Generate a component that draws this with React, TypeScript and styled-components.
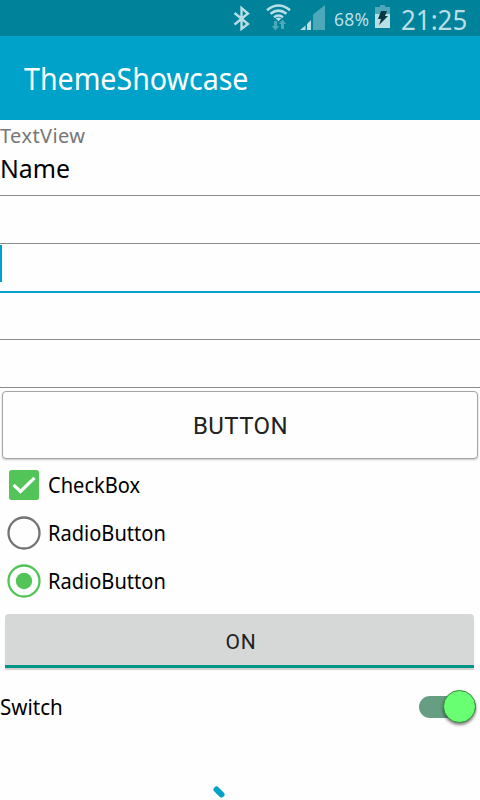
import React from 'react';
import styled, { createGlobalStyle } from 'styled-components';

const GlobalStyle = createGlobalStyle`
  * { box-sizing: border-box; }
  html, body { margin: 0; background: #fefefe; overflow: hidden; }
  body { font-family: "Noto Sans", sans-serif; color: #000; }
`;

const Screen = styled.main`
  width: 480px;
  height: 800px;
  display: flex;
  flex-direction: column;
  overflow: hidden;
  background: #fefefe;
`;

const StatusBar = styled.header`
  flex: none;
  height: 36px;
  display: flex;
  justify-content: flex-end;
  background: #00829b;
`;

const StatusIcons = styled.svg`
  flex: none;
  width: 100px;
  height: 36px;
`;

const BatteryIcon = styled.svg`
  flex: none;
  width: 20px;
  height: 36px;
`;

const Label = styled.span<{
  $size: number;
  $spacing?: number;
  $color?: string;
  $font?: string;
  $condense?: number;
}>`
  display: inline-block;
  font-family: ${(p) => p.$font ?? '"Noto Sans"'}, sans-serif;
  font-size: ${(p) => p.$size}px;
  letter-spacing: ${(p) => p.$spacing ?? 0}px;
  color: ${(p) => p.$color ?? '#000'};
  white-space: nowrap;
  transform: scaleX(${(p) => p.$condense ?? 1});
  transform-origin: left center;
`;

const Percent = styled.div`
  width: 40px;
  padding-left: 4px;
  line-height: 38px;
`;

const Clock = styled.div`
  width: 90px;
  padding-left: 11px;
  line-height: 39px;
`;

const AppBar = styled.header`
  flex: none;
  height: 84px;
  padding: 0 24px;
  line-height: 85px;
  background: #00a2ca;
`;

const Caption = styled.div`
  flex: none;
  height: 28px;
  line-height: 32px;
`;

const Field = styled.div<{ $height: number; $focused?: boolean }>`
  flex: none;
  height: ${(p) => p.$height}px;
  line-height: 41px;
  border-bottom: ${(p) => (p.$focused ? '2px solid #00a2ca' : '1px solid #8b8b8b')};
`;

const Caret = styled.div`
  width: 2px;
  height: 37px;
  margin-top: 1px;
  background: #00a2ca;
`;

const OutlineButton = styled.button`
  flex: none;
  width: 476px;
  height: 68px;
  margin: 3px 2px 2px;
  padding: 2px 0 0 1px;
  border: 1px solid #a5a5a5;
  border-radius: 4px;
  background: #fefefe;
  box-shadow: 0 1px 2px rgba(0, 0, 0, 0.22);
`;

const Option = styled.div`
  flex: none;
  height: 48px;
  display: flex;
  align-items: center;
`;

const Mark = styled.svg`
  flex: none;
  width: 48px;
  height: 48px;
`;

const ToggleButton = styled.button`
  flex: none;
  width: 469px;
  height: 54px;
  margin: 9px 5px 0;
  padding: 4px 0 0 3px;
  border: 0;
  border-bottom: 3px solid #009688;
  border-radius: 4px 4px 0 0;
  background: #d6d8d7;
  box-shadow: 0 2px 1px rgba(0, 0, 0, 0.18);
`;

const SwitchRow = styled.div`
  flex: none;
  height: 48px;
  margin-top: 15px;
  display: flex;
  align-items: center;
  justify-content: space-between;
`;

const SwitchTrack = styled.div`
  width: 57px;
  height: 22px;
  margin-right: 4px;
  display: flex;
  align-items: center;
  justify-content: flex-end;
  border-radius: 11px;
  background: #669e83;
`;

const SwitchThumb = styled.div`
  flex: none;
  width: 33px;
  height: 33px;
  margin-top: -1px;
  border: 1px solid #398940;
  border-radius: 50%;
  background: #69ff73;
  box-shadow: 0 2px 3px rgba(0, 0, 0, 0.5);
`;

const Spinner = styled.svg`
  flex: none;
  align-self: flex-start;
  width: 24px;
  height: 24px;
  margin: 49px 0 0 207px;
`;

const ROBOTO = 'Roboto';
const PALE = '#b9dfe5';

export default function App() {
  return (
    <>
      <GlobalStyle />
      <Screen>
        <StatusBar>
          <StatusIcons viewBox="230 0 100 36">
            <path d="M234.5 13 248 24 241.5 29V8L248 13.5 234.5 24.5" fill="none" stroke={PALE} strokeWidth="2.3" />
            <g fill="none" stroke={PALE} strokeWidth="2.6">
              <path d="M267 10.2Q278.500 .8 290 10.200" />
              <path d="M270.500 13.8Q278.500 7.600 286.500 13.800" />
              <path d="M274 17.200Q278.500 13.800 283 17.200" />
            </g>
            <path d="M275.700 18.500Q278.500 16.500 281.300 18.500L278.500 21.200Z" fill={PALE} />
            <path d="M274 21h3v5h2.200l-3.700 4.500-3.700-4.500H274ZM281 29v-5h-2.200l3.700-4.500 3.700 4.500H284v5Z" fill="#4da8b9" />
            <path d="M313 14.500 325 5v25h-12Z" fill="#4da8b9" />
            <path d="M300 30l5.500-4.500V30ZM307 24l4-4v10h-4Z" fill={PALE} />
          </StatusIcons>
          <Percent><Label $size={17.5} $spacing={0.2} $color={PALE}>68%</Label></Percent>
          <BatteryIcon viewBox="370 0 20 36">
            <path d="M375 7h5V5h5v2h5v7h-15Z" fill="#4da8b9" />
            <path d="M375 14h15v14h-15Z" fill={PALE} />
            <path d="M381 11h6l-2 5h3l-9 9 2-6h-3Z" fill="#063943" />
          </BatteryIcon>
          <Clock><Label $size={27} $condense={0.96} $color={PALE}>21:25</Label></Clock>
        </StatusBar>

        <AppBar><Label $size={30} $condense={0.952} $color="#fff">ThemeShowcase</Label></AppBar>

        <Caption><Label $size={20} $spacing={0.4} $color="#777">TextView</Label></Caption>
        <Field $height={48}><Label $size={26} $condense={0.955}>Name</Label></Field>
        <Field $height={48} />
        <Field $height={49} $focused><Caret /></Field>
        <Field $height={47} />
        <Field $height={48} />

        <OutlineButton>
          <Label $font={ROBOTO} $size={24} $spacing={0.4} $color="#222">BUTTON</Label>
        </OutlineButton>

        <Option>
          <Mark viewBox="0 0 48 48">
            <rect x="9" y="9" width="30" height="30" rx="2.500" fill="#53c558" />
            <path d="M13.500 23.800 20.500 30.500 34.500 16.800" fill="none" stroke="#fff" strokeWidth="3.200" />
          </Mark>
          <Label $size={21} $condense={0.955}>CheckBox</Label>
        </Option>
        <Option>
          <Mark viewBox="0 0 48 48">
            <circle cx="24" cy="24" r="15.500" fill="none" stroke="#737373" strokeWidth="2.300" />
          </Mark>
          <Label $size={21} $condense={0.955}>RadioButton</Label>
        </Option>
        <Option>
          <Mark viewBox="0 0 48 48">
            <circle cx="24" cy="24" r="15.500" fill="none" stroke="#53c558" strokeWidth="2.300" />
            <circle cx="24" cy="24" r="8.200" fill="#53c558" />
          </Mark>
          <Label $size={21} $condense={0.955}>RadioButton</Label>
        </Option>

        <ToggleButton>
          <Label $font={ROBOTO} $size={21} $spacing={0.7} $color="#222">ON</Label>
        </ToggleButton>

        <SwitchRow>
          <Label $size={21} $condense={0.98}>Switch</Label>
          <SwitchTrack><SwitchThumb /></SwitchTrack>
        </SwitchRow>

        <Spinner viewBox="0 0 24 24">
          <path d="M9.500 9.500 14.500 14.500" stroke="#00a2ca" strokeWidth="6" strokeLinecap="round" />
        </Spinner>
      </Screen>
    </>
  );
}
